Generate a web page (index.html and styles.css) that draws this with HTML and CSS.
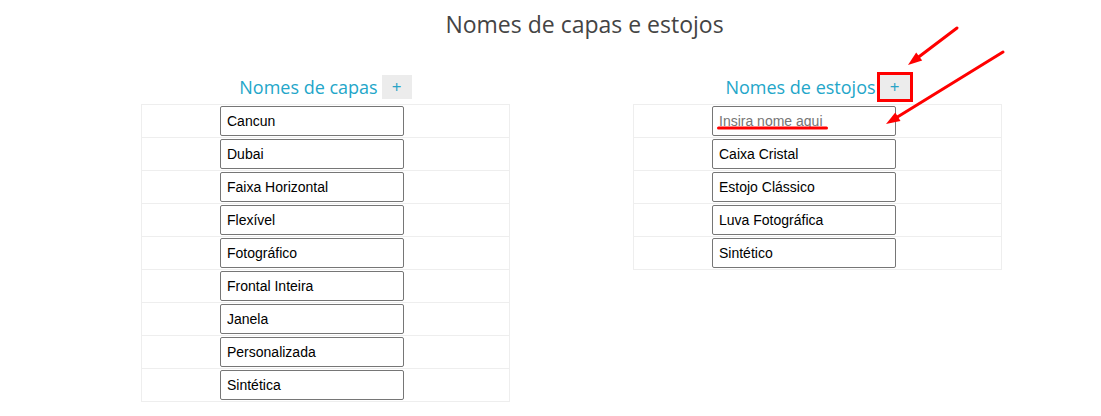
FILE: index.html
```html
<!DOCTYPE html>
<html lang="pt">
<head>
<meta charset="utf-8">
<title>Nomes de capas e estojos</title>
<link rel="stylesheet" href="styles.css">
</head>
<body>
<div class="page">
  <h1 class="title">Nomes de capas e estojos</h1>
  <div class="columns">
    <section class="col">
      <div class="col-head">
        <h2 class="col-title">Nomes de capas</h2>
        <button class="add-btn" type="button">+</button>
      </div>
      <div class="list">
        <div class="row"><input class="name-input" type="text" value="Cancun"></div>
        <div class="row"><input class="name-input" type="text" value="Dubai"></div>
        <div class="row"><input class="name-input" type="text" value="Faixa Horizontal"></div>
        <div class="row"><input class="name-input" type="text" value="Flexível"></div>
        <div class="row"><input class="name-input" type="text" value="Fotográfico"></div>
        <div class="row"><input class="name-input" type="text" value="Frontal Inteira"></div>
        <div class="row"><input class="name-input" type="text" value="Janela"></div>
        <div class="row"><input class="name-input" type="text" value="Personalizada"></div>
        <div class="row"><input class="name-input" type="text" value="Sintética"></div>
      </div>
    </section>
    <section class="col">
      <div class="col-head">
        <h2 class="col-title">Nomes de estojos</h2>
        <button class="add-btn" type="button">+</button>
      </div>
      <div class="list">
        <div class="row"><input class="name-input" type="text" placeholder="Insira nome aqui"></div>
        <div class="row"><input class="name-input" type="text" value="Caixa Cristal"></div>
        <div class="row"><input class="name-input" type="text" value="Estojo Clássico"></div>
        <div class="row"><input class="name-input" type="text" value="Luva Fotográfica"></div>
        <div class="row"><input class="name-input" type="text" value="Sintético"></div>
      </div>
    </section>
  </div>
  <svg class="annotations" width="1101" height="416" viewBox="0 0 1101 416" aria-hidden="true">
    <rect x="878.5" y="73.5" width="33" height="27" fill="none" stroke="#ff0000" stroke-width="3"/>
    <rect x="717" y="126.5" width="111" height="3" rx="1.5" fill="#ff0000"/>
    <line x1="957" y1="28" x2="918" y2="57.5" stroke="#ff0000" stroke-width="3" stroke-linecap="round"/>
    <polygon points="908,65 922.2,60.6 916.2,52.6" fill="#ff0000"/>
    <line x1="1003" y1="52" x2="897" y2="117.3" stroke="#ff0000" stroke-width="3" stroke-linecap="round"/>
    <polygon points="886,124 900.5,121 895.3,112.4" fill="#ff0000"/>
  </svg>
</div>
</body>
</html>
```

FILE: styles.css
```css
html, body {
  margin: 0;
  padding: 0;
  background: #ffffff;
}

.page {
  position: relative;
  width: 1101px;
  height: 416px;
  overflow: hidden;
  font-family: "Open Sans", "Liberation Sans", sans-serif;
}

.title {
  margin: 10px 0 0 0;
  padding-left: 68px;
  text-align: center;
  font-size: 23px;
  line-height: 29px;
  font-weight: 400;
  color: #444444;
}

.columns {
  display: flex;
  gap: 1px;
  padding-left: 80px;
  margin-top: 36px;
}

.col {
  width: 491px;
  display: flex;
  flex-direction: column;
  align-items: center;
}

.col-head {
  display: flex;
  align-items: center;
  gap: 4px;
  height: 24px;
  margin-bottom: 5px;
}

.col-title {
  margin: 0;
  font-size: 18px;
  line-height: 24px;
  font-weight: 400;
  color: #23a6c9;
}

.add-btn {
  width: 30px;
  height: 24px;
  padding: 0;
  border: none;
  border-radius: 0;
  background: #ececec;
  color: #2aa3c6;
  font-family: "Open Sans", "Liberation Sans", sans-serif;
  font-size: 17px;
  line-height: 24px;
}

.list {
  width: 369px;
  box-sizing: border-box;
  border: 1px solid #eeeeee;
  border-bottom: none;
}

.row {
  padding: 1px 0 1px 78px;
  border-bottom: 1px solid #eeeeee;
}

.name-input {
  display: block;
  width: 184px;
  height: 30px;
  box-sizing: border-box;
  margin: 0;
  padding: 0 6px;
  border: 1px solid #767676;
  border-radius: 2px;
  background: #ffffff;
  font-family: "Liberation Sans", Arial, sans-serif;
  font-size: 14px;
  color: #000000;
}

.name-input::placeholder {
  color: #757575;
}

.annotations {
  position: absolute;
  left: 0;
  top: 0;
  pointer-events: none;
}
```
